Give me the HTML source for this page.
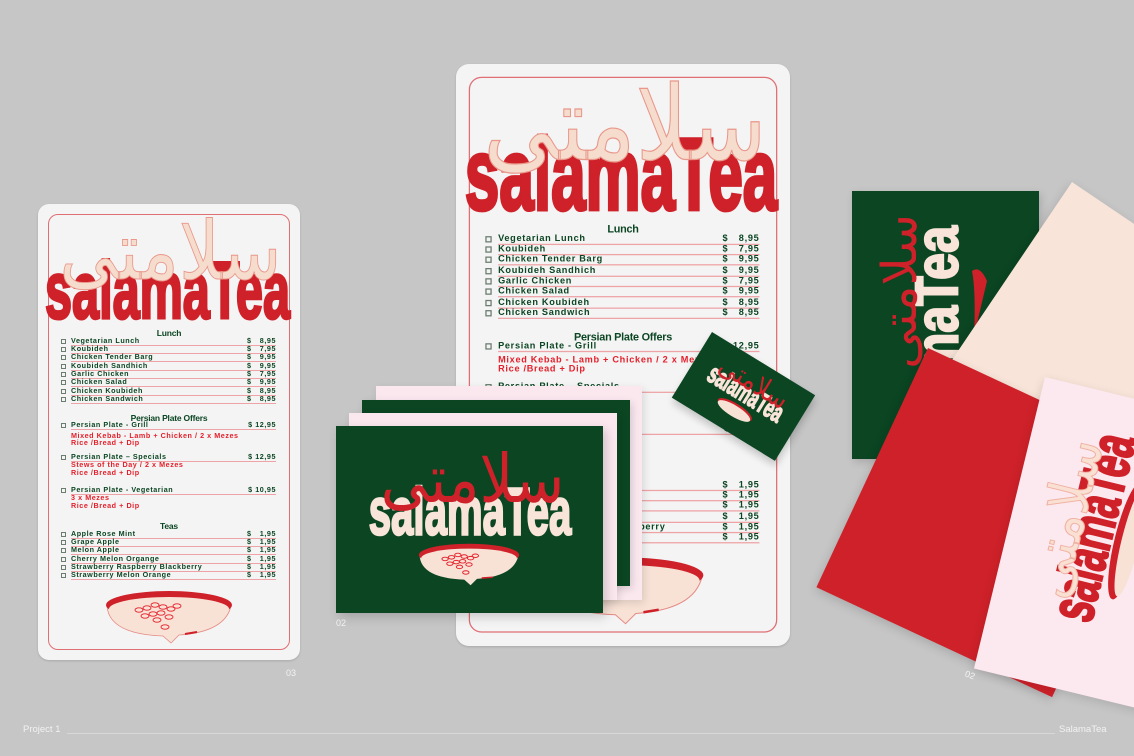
<!DOCTYPE html>
<html><head><meta charset="utf-8">
<style>
*{margin:0;padding:0;box-sizing:border-box}
body{width:1134px;height:756px;background:#c6c6c6;position:relative;overflow:hidden;font-family:"Liberation Sans",sans-serif}
.abs{position:absolute}
.card{position:absolute;background:#f4f4f4;border-radius:11px;box-shadow:0 1px 2px rgba(0,0,0,.15)}
.inner{position:absolute;left:10px;top:10px;width:242px;height:436px;border:1px solid #df6f74;border-radius:10px}
.menu{position:absolute;left:0;top:0;width:262px;height:456px;transform-origin:0 0}
.h{position:absolute;left:0;width:262px;text-align:center;font-family:"Liberation Sans Narrow","Liberation Sans",sans-serif;font-weight:bold;font-size:8.5px;color:#0b4522;letter-spacing:-.2px}
.r{position:absolute;left:23px;width:215px;height:8px;font-size:7.2px;font-weight:bold;color:#0b4522;letter-spacing:.55px;line-height:8px;white-space:nowrap}
.r .cb{position:absolute;left:0;top:1.5px;width:5px;height:5px;border:.7px solid #6a7d70}
.r .n{position:absolute;left:10px}
.r .d{position:absolute;left:186px}
.r .p{position:absolute;right:0}
.r .u{position:absolute;left:10px;right:0;bottom:-1px;height:0;border-top:.8px solid #eea3a6}
.red{position:absolute;left:33px;font-size:7.2px;font-weight:bold;color:#e5202b;letter-spacing:.55px;line-height:8px;white-space:nowrap}
.lbl{position:absolute;color:#f2f2f2;font-size:9px}
</style></head><body>

<!-- LEFT MENU -->
<div class="card" style="left:38px;top:204px;width:262px;height:456px">
<div class="menu">
<div class="inner"></div>
<svg class="abs" style="left:4px;top:4px" width="251" height="114" viewBox="0 0 250 112">
<text x="3" y="109" font-family="Liberation Sans" font-weight="bold" font-size="80" textLength="244" lengthAdjust="spacingAndGlyphs" fill="#cf2129" stroke="#cf2129" stroke-width="3">salamaTea</text>
<text transform="translate(128,70) scale(1.15,1.3)" x="0" y="0" text-anchor="middle" font-family="DejaVu Sans" font-size="62" fill="#f5dccd" stroke="#e9978a" stroke-width=".7">سلامتى</text>
</svg>
<div class="h" style="top:124px">Lunch</div>
<div class="r" style="top:133px"><i class="cb"></i><span class="n">Vegetarian Lunch</span><span class="d">$</span><span class="p">8,95</span><i class="u"></i></div>
<div class="r" style="top:141px"><i class="cb"></i><span class="n">Koubideh</span><span class="d">$</span><span class="p">7,95</span><i class="u"></i></div>
<div class="r" style="top:149px"><i class="cb"></i><span class="n">Chicken Tender Barg</span><span class="d">$</span><span class="p">9,95</span><i class="u"></i></div>
<div class="r" style="top:158px"><i class="cb"></i><span class="n">Koubideh Sandhich</span><span class="d">$</span><span class="p">9,95</span><i class="u"></i></div>
<div class="r" style="top:166px"><i class="cb"></i><span class="n">Garlic Chicken</span><span class="d">$</span><span class="p">7,95</span><i class="u"></i></div>
<div class="r" style="top:174px"><i class="cb"></i><span class="n">Chicken Salad</span><span class="d">$</span><span class="p">9,95</span><i class="u"></i></div>
<div class="r" style="top:183px"><i class="cb"></i><span class="n">Chicken Koubideh</span><span class="d">$</span><span class="p">8,95</span><i class="u"></i></div>
<div class="r" style="top:191px"><i class="cb"></i><span class="n">Chicken Sandwich</span><span class="d">$</span><span class="p">8,95</span><i class="u"></i></div>
<div class="h" style="top:209px">Persian Plate Offers</div>
<div class="r" style="top:217px"><i class="cb"></i><span class="n">Persian Plate - Grill</span><span class="p">$ 12,95</span><i class="u"></i></div>
<div class="red" style="top:228px">Mixed Kebab - Lamb + Chicken / 2 x Mezes</div>
<div class="red" style="top:235px">Rice /Bread + Dip</div>
<div class="r" style="top:249px"><i class="cb"></i><span class="n">Persian Plate – Specials</span><span class="p">$ 12,95</span><i class="u"></i></div>
<div class="red" style="top:257px">Stews of the Day / 2 x Mezes</div>
<div class="red" style="top:265px">Rice /Bread + Dip</div>
<div class="r" style="top:282px"><i class="cb"></i><span class="n">Persian Plate - Vegetarian</span><span class="p">$ 10,95</span><i class="u"></i></div>
<div class="red" style="top:290px">3 x Mezes</div>
<div class="red" style="top:298px">Rice /Bread + Dip</div>
<div class="h" style="top:317px">Teas</div>
<div class="r" style="top:326px"><i class="cb"></i><span class="n">Apple Rose Mint</span><span class="d">$</span><span class="p">1,95</span><i class="u"></i></div>
<div class="r" style="top:334px"><i class="cb"></i><span class="n">Grape Apple</span><span class="d">$</span><span class="p">1,95</span><i class="u"></i></div>
<div class="r" style="top:342px"><i class="cb"></i><span class="n">Melon Apple</span><span class="d">$</span><span class="p">1,95</span><i class="u"></i></div>
<div class="r" style="top:351px"><i class="cb"></i><span class="n">Cherry Melon Organge</span><span class="d">$</span><span class="p">1,95</span><i class="u"></i></div>
<div class="r" style="top:359px"><i class="cb"></i><span class="n">Strawberry Raspberry Blackberry</span><span class="d">$</span><span class="p">1,95</span><i class="u"></i></div>
<div class="r" style="top:367px"><i class="cb"></i><span class="n">Strawberry Melon Orange</span><span class="d">$</span><span class="p">1,95</span><i class="u"></i></div>
<svg class="abs" style="left:67px;top:386px" width="128" height="54" viewBox="0 0 128 54">
<path d="M2,16 Q4,44 58,46 L66,53 L74,45 Q120,42 126,16 Z" fill="#f8e2d6" stroke="#e58a84" stroke-width=".8"/>
<ellipse cx="64" cy="15" rx="63" ry="14" fill="#cf2129"/>
<ellipse cx="64" cy="19" rx="60" ry="12" fill="#f8e2d6"/>
<path d="M80,44 L92,42" stroke="#cf2129" stroke-width="2"/>
<g fill="none" stroke="#e5202b" stroke-width=".9">
<ellipse cx="34" cy="20" rx="4" ry="2.2"/><ellipse cx="42" cy="18" rx="4" ry="2.2"/><ellipse cx="50" cy="15" rx="4" ry="2.2"/><ellipse cx="58" cy="17" rx="4" ry="2.2"/><ellipse cx="66" cy="19" rx="4" ry="2.2"/><ellipse cx="72" cy="16" rx="4" ry="2.2"/>
<ellipse cx="40" cy="26" rx="4" ry="2.2"/><ellipse cx="48" cy="24" rx="4" ry="2.2"/><ellipse cx="56" cy="23" rx="4" ry="2.2"/><ellipse cx="64" cy="27" rx="4" ry="2.2"/><ellipse cx="52" cy="30" rx="4" ry="2.2"/><ellipse cx="60" cy="37" rx="4" ry="2.2"/>
</g></svg>
</div>
</div>
<div class="lbl" style="left:286px;top:668px">03</div>

<!-- CENTER MENU -->
<div class="card" style="left:456px;top:64px;width:334px;height:582px;border-radius:13px;overflow:hidden">
<div class="menu" style="transform:scale(1.275)">
<div class="inner"></div>
<svg class="abs" style="left:4px;top:4px" width="251" height="114" viewBox="0 0 250 112">
<text x="3" y="109" font-family="Liberation Sans" font-weight="bold" font-size="80" textLength="244" lengthAdjust="spacingAndGlyphs" fill="#cf2129" stroke="#cf2129" stroke-width="3">salamaTea</text>
<text transform="translate(128,70) scale(1.15,1.3)" x="0" y="0" text-anchor="middle" font-family="DejaVu Sans" font-size="62" fill="#f5dccd" stroke="#e9978a" stroke-width=".7">سلامتى</text>
</svg>
<div class="h" style="top:124px">Lunch</div>
<div class="r" style="top:133px"><i class="cb"></i><span class="n">Vegetarian Lunch</span><span class="d">$</span><span class="p">8,95</span><i class="u"></i></div>
<div class="r" style="top:141px"><i class="cb"></i><span class="n">Koubideh</span><span class="d">$</span><span class="p">7,95</span><i class="u"></i></div>
<div class="r" style="top:149px"><i class="cb"></i><span class="n">Chicken Tender Barg</span><span class="d">$</span><span class="p">9,95</span><i class="u"></i></div>
<div class="r" style="top:158px"><i class="cb"></i><span class="n">Koubideh Sandhich</span><span class="d">$</span><span class="p">9,95</span><i class="u"></i></div>
<div class="r" style="top:166px"><i class="cb"></i><span class="n">Garlic Chicken</span><span class="d">$</span><span class="p">7,95</span><i class="u"></i></div>
<div class="r" style="top:174px"><i class="cb"></i><span class="n">Chicken Salad</span><span class="d">$</span><span class="p">9,95</span><i class="u"></i></div>
<div class="r" style="top:183px"><i class="cb"></i><span class="n">Chicken Koubideh</span><span class="d">$</span><span class="p">8,95</span><i class="u"></i></div>
<div class="r" style="top:191px"><i class="cb"></i><span class="n">Chicken Sandwich</span><span class="d">$</span><span class="p">8,95</span><i class="u"></i></div>
<div class="h" style="top:209px">Persian Plate Offers</div>
<div class="r" style="top:217px"><i class="cb"></i><span class="n">Persian Plate - Grill</span><span class="p">$ 12,95</span><i class="u"></i></div>
<div class="red" style="top:228px">Mixed Kebab - Lamb + Chicken / 2 x Mezes</div>
<div class="red" style="top:235px">Rice /Bread + Dip</div>
<div class="r" style="top:249px"><i class="cb"></i><span class="n">Persian Plate – Specials</span><span class="p">$ 12,95</span><i class="u"></i></div>
<div class="red" style="top:257px">Stews of the Day / 2 x Mezes</div>
<div class="red" style="top:265px">Rice /Bread + Dip</div>
<div class="r" style="top:282px"><i class="cb"></i><span class="n">Persian Plate - Vegetarian</span><span class="p">$ 10,95</span><i class="u"></i></div>
<div class="red" style="top:290px">3 x Mezes</div>
<div class="red" style="top:298px">Rice /Bread + Dip</div>
<div class="h" style="top:317px">Teas</div>
<div class="r" style="top:326px"><i class="cb"></i><span class="n">Apple Rose Mint</span><span class="d">$</span><span class="p">1,95</span><i class="u"></i></div>
<div class="r" style="top:334px"><i class="cb"></i><span class="n">Grape Apple</span><span class="d">$</span><span class="p">1,95</span><i class="u"></i></div>
<div class="r" style="top:342px"><i class="cb"></i><span class="n">Melon Apple</span><span class="d">$</span><span class="p">1,95</span><i class="u"></i></div>
<div class="r" style="top:351px"><i class="cb"></i><span class="n">Cherry Melon Organge</span><span class="d">$</span><span class="p">1,95</span><i class="u"></i></div>
<div class="r" style="top:359px"><i class="cb"></i><span class="n">Strawberry Raspberry Blackberry</span><span class="d">$</span><span class="p">1,95</span><i class="u"></i></div>
<div class="r" style="top:367px"><i class="cb"></i><span class="n">Strawberry Melon Orange</span><span class="d">$</span><span class="p">1,95</span><i class="u"></i></div>
<svg class="abs" style="left:67px;top:386px" width="128" height="54" viewBox="0 0 128 54">
<path d="M2,16 Q4,44 58,46 L66,53 L74,45 Q120,42 126,16 Z" fill="#f8e2d6" stroke="#e58a84" stroke-width=".8"/>
<ellipse cx="64" cy="15" rx="63" ry="14" fill="#cf2129"/>
<ellipse cx="64" cy="19" rx="60" ry="12" fill="#f8e2d6"/>
<path d="M80,44 L92,42" stroke="#cf2129" stroke-width="2"/>
</svg>
</div>
</div>

<!-- STACKED BUSINESS CARDS -->
<div class="abs" style="left:376px;top:386px;width:266px;height:214px;background:#fbe8ef;box-shadow:2px 3px 8px rgba(0,0,0,.12)"></div>
<div class="abs" style="left:362px;top:400px;width:268px;height:186px;background:#0b4522;box-shadow:2px 3px 8px rgba(0,0,0,.15)"></div>
<div class="abs" style="left:349px;top:413px;width:268px;height:187px;background:#fbe8ef;box-shadow:2px 3px 8px rgba(0,0,0,.12)"></div>
<div class="abs" style="left:336px;top:426px;width:267px;height:187px;background:#0b4522;box-shadow:3px 4px 10px rgba(0,0,0,.18)">
<svg class="abs" style="left:30px;top:18px" width="208" height="93" viewBox="0 0 250 112">
<text x="3" y="109" font-family="Liberation Sans" font-weight="bold" font-size="80" textLength="244" lengthAdjust="spacingAndGlyphs" fill="#f8e4d8" stroke="#f8e4d8" stroke-width="3">salamaTea</text>
<text transform="translate(128,70) scale(1.15,1.3)" x="0" y="0" text-anchor="middle" font-family="DejaVu Sans" font-size="62" fill="#cf2129">سلامتى</text>
</svg>
<svg class="abs" style="left:82px;top:117px" width="102" height="43" viewBox="0 0 128 54">
<path d="M2,16 Q4,44 58,46 L66,53 L74,45 Q120,42 126,16 Z" fill="#f8e2d6"/>
<ellipse cx="64" cy="15" rx="63" ry="14" fill="#cf2129"/>
<ellipse cx="64" cy="19" rx="60" ry="12" fill="#f8e2d6"/>
<path d="M80,44 L94,43" stroke="#cf2129" stroke-width="2"/>
<g fill="none" stroke="#e5202b" stroke-width="1.2">
<ellipse cx="34" cy="20" rx="4" ry="2.2"/><ellipse cx="42" cy="18" rx="4" ry="2.2"/><ellipse cx="50" cy="15" rx="4" ry="2.2"/><ellipse cx="58" cy="17" rx="4" ry="2.2"/><ellipse cx="66" cy="19" rx="4" ry="2.2"/><ellipse cx="72" cy="16" rx="4" ry="2.2"/>
<ellipse cx="40" cy="26" rx="4" ry="2.2"/><ellipse cx="48" cy="24" rx="4" ry="2.2"/><ellipse cx="56" cy="23" rx="4" ry="2.2"/><ellipse cx="64" cy="27" rx="4" ry="2.2"/><ellipse cx="52" cy="30" rx="4" ry="2.2"/><ellipse cx="60" cy="37" rx="4" ry="2.2"/>
</g></svg>
</div>
<div class="lbl" style="left:336px;top:618px">02</div>

<!-- small rotated card -->
<div class="abs" style="left:712px;top:332px;width:121px;height:77px;background:#0b4522;transform-origin:0 0;transform:rotate(31.5deg);box-shadow:3px 4px 8px rgba(0,0,0,.2)">
<svg class="abs" style="left:18px;top:6px" width="86" height="39" viewBox="0 0 250 112">
<text x="3" y="109" font-family="Liberation Sans" font-weight="bold" font-size="80" textLength="244" lengthAdjust="spacingAndGlyphs" fill="#f8e4d8" stroke="#f8e4d8" stroke-width="4">salamaTea</text>
<text transform="translate(128,70) scale(1.15,1.3)" x="0" y="0" text-anchor="middle" font-family="DejaVu Sans" font-size="62" fill="#cf2129">سلامتى</text>
</svg>
<svg class="abs" style="left:40px;top:48px" width="40" height="17" viewBox="0 0 128 54">
<ellipse cx="64" cy="20" rx="63" ry="20" fill="#cf2129"/><ellipse cx="64" cy="25" rx="60" ry="18" fill="#f8e2d6"/>
</svg>
</div>

<!-- RIGHT CARDS -->
<div class="abs" style="left:852px;top:191px;width:187px;height:268px;background:#0b4522;box-shadow:2px 3px 8px rgba(0,0,0,.15);overflow:hidden">
<svg class="abs" style="left:0;top:0" width="187" height="268">
<g transform="translate(24,282) rotate(-90) scale(1,0.75)">
<text x="3" y="109" font-family="Liberation Sans" font-weight="bold" font-size="80" textLength="244" lengthAdjust="spacingAndGlyphs" fill="#f8e4d8" stroke="#f8e4d8" stroke-width="3">salamaTea</text>
</g>
<g transform="translate(22,190) rotate(-90) scale(0.7,0.6)">
<text transform="translate(128,70) scale(1.15,1.3)" x="0" y="0" text-anchor="middle" font-family="DejaVu Sans" font-size="62" fill="#cf2129">سلامتى</text>
</g>
<path d="M122,145 Q124,100 120,80 Q128,74 135,90 Z" fill="#cf2129"/>
</svg>
</div>
<div class="abs" style="left:1072px;top:182px;width:320px;height:261px;background:#f8e4d8;transform-origin:0 0;transform:rotate(34deg);box-shadow:0 3px 10px rgba(0,0,0,.12)"></div>
<div class="abs" style="left:928px;top:348px;width:260px;height:264px;background:#cf2129;transform-origin:0 0;transform:rotate(25deg);box-shadow:0 3px 10px rgba(0,0,0,.15)"></div>
<div class="abs" style="left:1045px;top:377px;width:300px;height:300px;background:#fce8ef;transform-origin:0 0;transform:rotate(13.7deg);box-shadow:0 3px 10px rgba(0,0,0,.12);overflow:hidden">
<svg class="abs" style="left:0;top:0" width="300" height="300">
<g transform="translate(18,232) rotate(-90) scale(0.78)">
<text x="3" y="109" font-family="Liberation Sans" font-weight="bold" font-size="80" textLength="244" lengthAdjust="spacingAndGlyphs" fill="#cf2129" stroke="#cf2129" stroke-width="3">salamaTea</text>
<text transform="translate(128,70) scale(1.15,1.3)" x="0" y="0" text-anchor="middle" font-family="DejaVu Sans" font-size="58" fill="#f9e0d2" stroke="#efb0a0" stroke-width="1">سلامتى</text>
</g>
<ellipse cx="118" cy="140" rx="12" ry="60" fill="#cf2129"/>
<ellipse cx="122" cy="140" rx="9" ry="56" fill="#f8e2d6"/>
</svg>
</div>
<div class="lbl" style="left:965px;top:670px;transform:rotate(20deg)">02</div>

<!-- FOOTER -->
<div class="lbl" style="left:23px;top:724px;font-size:9.5px">Project 1</div>
<div class="abs" style="left:67px;top:733px;width:988px;height:1px;background:#d8d8d8"></div>
<div class="lbl" style="left:1059px;top:724px;font-size:9.5px">SalamaTea</div>
</body></html>
